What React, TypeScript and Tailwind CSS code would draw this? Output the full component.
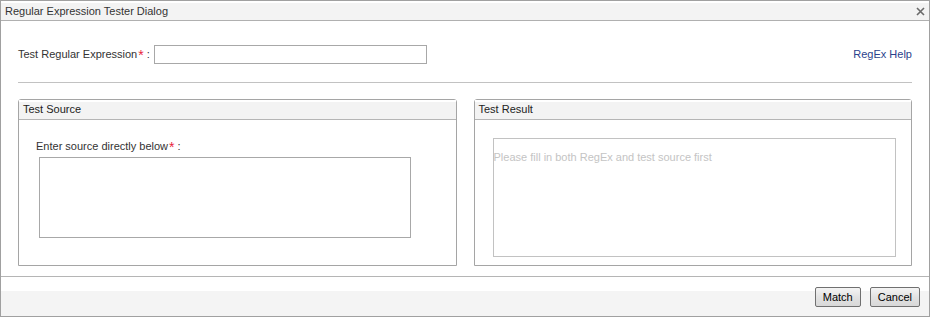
// Regular Expression Tester dialog

function Required() {
  return <span className="text-[#e8243c] text-[14px] leading-none relative top-[2px] ml-[1px]">*</span>;
}

function Fieldset({ title, children }: { title: string; children: React.ReactNode }) {
  return (
    <div className="flex-1 h-[167px] border border-[#a5a5a5] rounded-t-[3px] flex flex-col">
      <div className="h-[20px] border-b border-[#b5b5b5] bg-[linear-gradient(to_bottom,white_2px,#f3f3f3_2px)] pl-[4px] flex items-center text-[#222]">
        {title}
      </div>
      {children}
    </div>
  );
}

function DialogButton({ label }: { label: string }) {
  return (
    <button className="h-[20px] px-[7px] border border-[#707070] rounded-[2px] bg-[linear-gradient(to_bottom,#f4f4f4,#e2e2e2_50%,#d8d8d8)] text-[11px] text-black leading-none">
      {label}
    </button>
  );
}

export default function App() {
  return (
    <div className="w-[930px] h-[317px] border border-[#a0a0a0] bg-white flex flex-col font-['Liberation_Sans',Arial,sans-serif] text-[11px] text-[#333]">
      {/* Title bar */}
      <div className="h-[20px] border-b border-[#b0b0b0] bg-[linear-gradient(to_bottom,white_2px,#f3f3f3_2px)] flex items-center justify-between pl-[4px] pr-[4px]">
        <span className="text-[#333] pt-[2px]">Regular Expression Tester Dialog</span>
        <svg width="9" height="9" viewBox="0 0 9 9" className="mt-[2px]">
          <path d="M1 1 L8 8 M8 1 L1 8" stroke="#6a6a6a" strokeWidth="1.6" />
        </svg>
      </div>

      {/* Body */}
      <div className="px-[17px] pt-[24px] flex flex-col">
        <div className="h-[19px] flex items-center">
          <span className="w-[136px]">
            Test Regular Expression<Required /> :
          </span>
          <input className="w-[273px] h-[19px] border border-[#a8a8a8] outline-none" />
          <a className="ml-auto text-[#2b3f8c] cursor-pointer">RegEx Help</a>
        </div>

        <div className="mt-[18px] border-t border-[#c2c2c2]" />

        <div className="mt-[16px] flex gap-[17px]">
          <Fieldset title="Test Source">
            <div className="pl-[17px] pt-[18px] leading-[14px]">
              Enter source directly below<Required /> :
            </div>
            <textarea className="ml-[20px] mt-[4px] w-[372px] h-[81px] border border-[#a8a8a8] resize-none outline-none" />
          </Fieldset>
          <Fieldset title="Test Result">
            <div className="ml-[18px] mt-[18px] w-[403px] h-[119px] border border-[#c2c2c2] pt-[10px] text-[#c4c4c4]">
              Please fill in both RegEx and test source first
            </div>
          </Fieldset>
        </div>
      </div>

      {/* Footer */}
      <div className="mt-[10px] border-t border-[#b5b5b5] flex-1 bg-[linear-gradient(to_bottom,white_14px,#f4f4f4_14px)] flex justify-end items-start gap-[9px] pt-[10px] pr-[9px]">
        <DialogButton label="Match" />
        <DialogButton label="Cancel" />
      </div>
    </div>
  );
}
